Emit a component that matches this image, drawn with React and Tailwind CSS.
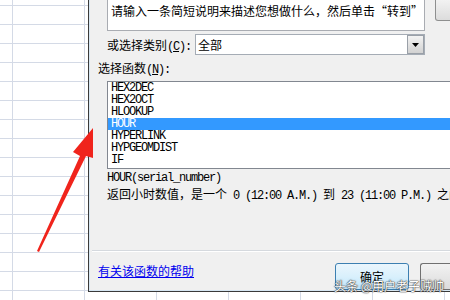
import React from 'react';

const FUNCS = ['HEX2DEC', 'HEX2OCT', 'HLOOKUP', 'HOUR', 'HYPERLINK', 'HYPGEOMDIST', 'IF'];

const cjk = "[font-family:'Noto_Sans_CJK_SC',sans-serif] text-[12px]";
const mono = "[font-family:'Liberation_Mono','Noto_Sans_CJK_SC',monospace] text-[12px] tracking-[-1.2px]";

// Mixed CJK / half-width text, the way SimSun lays it out
function Mixed({ parts }) {
  return parts.map(([t, isMono], i) => (
    <span key={i} className={isMono ? mono : cjk}>{t}</span>
  ));
}

export default function App() {
  return (
    <div className="relative w-[450px] h-[300px] overflow-hidden bg-white bg-[linear-gradient(to_right,#d4dae6_1px,transparent_1px),linear-gradient(to_bottom,#d4dae6_1px,transparent_1px)] bg-[size:72px_19px] bg-[position:12px_5px]">
      <div className="flex h-[292px]">
        <div className="w-[88px] shrink-0" />

        {/* Insert function dialog */}
        <div className="flex-1 border-l border-b border-[#3a3a3a] overflow-hidden">
          <div className="h-full border-l border-b border-[#d6e6f2] bg-[#f0f0f0] pl-2 flex flex-col text-black">
            {/* search row */}
            <div className="flex items-start">
              <div className={`ml-[9px] w-[318px] h-[31px] shrink-0 bg-white border border-t-0 border-[#a9acb2] pl-[3px] pt-[3px] leading-[16px] whitespace-nowrap ${cjk}`}>
                请输入一条简短说明来描述您想做什么，然后单击“转到”
              </div>
              <div className="ml-[10px] w-[60px] h-[21px] shrink-0 rounded-b-[3px] border border-t-0 border-[#8e8f8f] bg-[linear-gradient(#f2f2f2,#dcdcdc)]" />
            </div>

            {/* category row */}
            <div className="flex items-center mt-[3px] ml-[9px] h-[21px]">
              <span className="w-[88px] shrink-0 whitespace-nowrap leading-none">
                <Mixed parts={[['或选择类别', false]]} />
                <span className={mono}>(<span className="underline">C</span>):</span>
              </span>
              <div className="flex w-[230px] h-[21px] shrink-0 bg-white border border-[#a5acb5] items-center">
                <span className={`flex-1 pl-[2px] leading-none ${cjk}`}>全部</span>
                <div className="w-[17px] h-[19px] flex items-center justify-center border border-[#9aa0a8] bg-[linear-gradient(#f3f3f3,#d2d2d2)]">
                  <svg width="7" height="4" viewBox="0 0 7 4"><path d="M0 0h7L3.5 4z" fill="#000" /></svg>
                </div>
              </div>
            </div>

            {/* function list */}
            <div className="mt-[6px] h-[12px] leading-[12px] whitespace-nowrap">
              <Mixed parts={[['选择函数', false]]} />
              <span className={mono}>(<span className="underline">N</span>):</span>
            </div>
            <div className="mt-[8px] ml-[9px] w-[360px] h-[88px] shrink-0 bg-white border border-[#828790] pb-[2px]">
              {FUNCS.map((f) => (
                <div
                  key={f}
                  className={`h-[12px] leading-[12px] pl-[3px] ${mono} ${f === 'HOUR' ? 'bg-[#3399ff] text-white' : ''}`}
                >
                  {f}
                </div>
              ))}
            </div>

            <div className={`mt-[3px] ml-[9px] h-[12px] leading-[12px] whitespace-nowrap ${mono}`}>HOUR(serial_number)</div>
            <div className="mt-[2px] ml-[9px] h-[14px] leading-[14px] whitespace-pre">
              <Mixed
                parts={[
                  ['返回小时数值，是一个', false],
                  [' 0 (12:00 A.M.) ', true],
                  ['到', false],
                  [' 23 (11:00 P.M.) ', true],
                  ['之间的整数', false],
                ]}
              />
            </div>

            {/* footer */}
            <div className="mt-auto -ml-[6px] border-t border-[#d5d9de] border-b-white border-b h-0" />
            <div className="flex items-start h-[38px] pt-[11px]">
              <a className={`mt-[1px] text-[#0000ee] underline leading-[14px] whitespace-nowrap ${cjk}`}>有关该函数的帮助</a>
              <div className="flex-1" />
              <div className={`w-[74px] h-[27px] shrink-0 rounded-[3px] border border-[#3c7fb1] bg-[linear-gradient(#eaf6fd,#d9f0fc_50%,#bee6fd)] flex justify-center pt-[4px] ${cjk}`}>
                确定
              </div>
              <div className="ml-[11px] w-[30px] h-[27px] shrink-0 rounded-l-[3px] border border-r-0 border-[#707070] bg-[linear-gradient(#f2f2f2,#dcdcdc)]" />
            </div>
          </div>
        </div>
      </div>

      {/* watermark */}
      <span className="absolute left-[334px] top-[278px] text-[12px] leading-[16px] whitespace-nowrap text-white [font-family:'Noto_Sans_CJK_SC',sans-serif] [text-shadow:0_0_1px_#333,0_0_1px_#333,0_0_2px_#666]">
        头条 @用户老子贼帅
      </span>

      {/* red annotation arrow */}
      <svg className="absolute left-0 top-0" width="450" height="300" viewBox="0 0 450 300">
        <path d="M37 251 L80 156 L73 152 L93 128 L93 158 L86 156 L39 252 Z" fill="#f0241c" />
      </svg>
    </div>
  );
}
